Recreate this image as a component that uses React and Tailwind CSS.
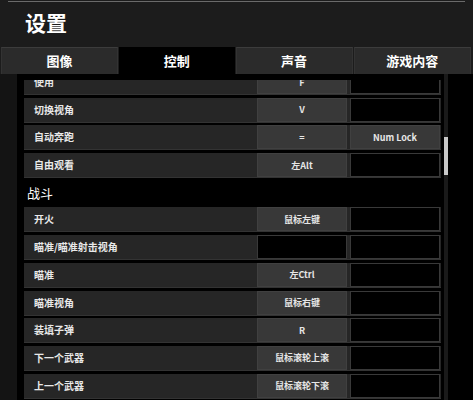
import React from "react";

const font = { fontFamily: '"Noto Sans CJK SC", "Noto Sans", sans-serif' };

const group1 = [
  { label: "使用", k1: "F", k2: "" },
  { label: "切换视角", k1: "V", k2: "" },
  { label: "自动奔跑", k1: "=", k2: "Num Lock" },
  { label: "自由观看", k1: "左Alt", k2: "" },
];
const group2 = [
  { label: "开火", k1: "鼠标左键", k2: "" },
  { label: "瞄准/瞄准射击视角", k1: "", k2: "" },
  { label: "瞄准", k1: "左Ctrl", k2: "" },
  { label: "瞄准视角", k1: "鼠标右键", k2: "" },
  { label: "装填子弹", k1: "R", k2: "" },
  { label: "下一个武器", k1: "鼠标滚轮上滚", k2: "" },
  { label: "上一个武器", k1: "鼠标滚轮下滚", k2: "" },
];

function Key({ v }) {
  if (!v) {
    return <div className="w-[90px] h-full bg-black border-[1.5px] border-[#393939]" />;
  }
  return (
    <div className="w-[90px] h-full bg-[#383838] border border-[#404040] flex items-center justify-center text-[9px] font-bold text-[#e6e6e6] leading-none">
      {v}
    </div>
  );
}

function Row({ r }) {
  return (
    <div className="h-[25px] shrink-0 flex items-center bg-[#262626] border-b border-[#333] pr-px">
      <div className="flex-1 pl-[10px] text-[10px] font-bold text-[#e8e8e8] leading-none">{r.label}</div>
      <div className="flex h-full gap-[3px]">
        <Key v={r.k1} />
        <Key v={r.k2} />
      </div>
    </div>
  );
}

export default function App() {
  return (
    <div className="w-[473px] h-[400px] bg-black overflow-hidden flex flex-col" style={font}>
      <div className="bg-[#1c1c1c] h-[47px] shrink-0 relative flex items-center pl-[25px]">
        <div className="absolute top-[1px] left-[8px] right-[8px] h-px bg-[#6a6a6a]" />
        <span className="text-[21px] font-bold text-white leading-none mt-[-2px]">设置</span>
      </div>
      <div className="bg-[#1c1c1c] h-[27px] shrink-0 flex pl-[1px] pr-[2px] gap-[1px]">
        {["图像", "控制", "声音", "游戏内容"].map((t, i) => (
          <div
            key={t}
            className={
              "flex-1 flex items-center justify-center text-[13px] font-bold text-white " +
              (i === 1 ? "bg-black" : "bg-[#2b2b2b] border-t border-[#3c3c3c] border-x border-x-[#333]")
            }
          >
            {t}
          </div>
        ))}
      </div>
      <div className="flex-1 flex overflow-hidden">
        <div className="w-[17px] bg-[#141414]" />
        <div className="w-[7px]" />
        <div className="w-[417px] mt-[6px] overflow-hidden">
          <div className="flex flex-col gap-[2.7px] mt-[-10px]">
            {group1.map((r) => (
              <Row key={r.label} r={r} />
            ))}
            <div className="h-[24px] shrink-0 flex items-center pl-[3px] text-[13px] text-white">战斗</div>
            {group2.map((r) => (
              <Row key={r.label} r={r} />
            ))}
          </div>
        </div>
        <div className="w-[3px]" />
        <div className="w-[4px] relative bg-[#1a1a1a]">
          <div className="absolute left-0 right-0 top-[63px] h-[38px] bg-[#c8c8c8]" />
        </div>
      </div>
    </div>
  );
}
